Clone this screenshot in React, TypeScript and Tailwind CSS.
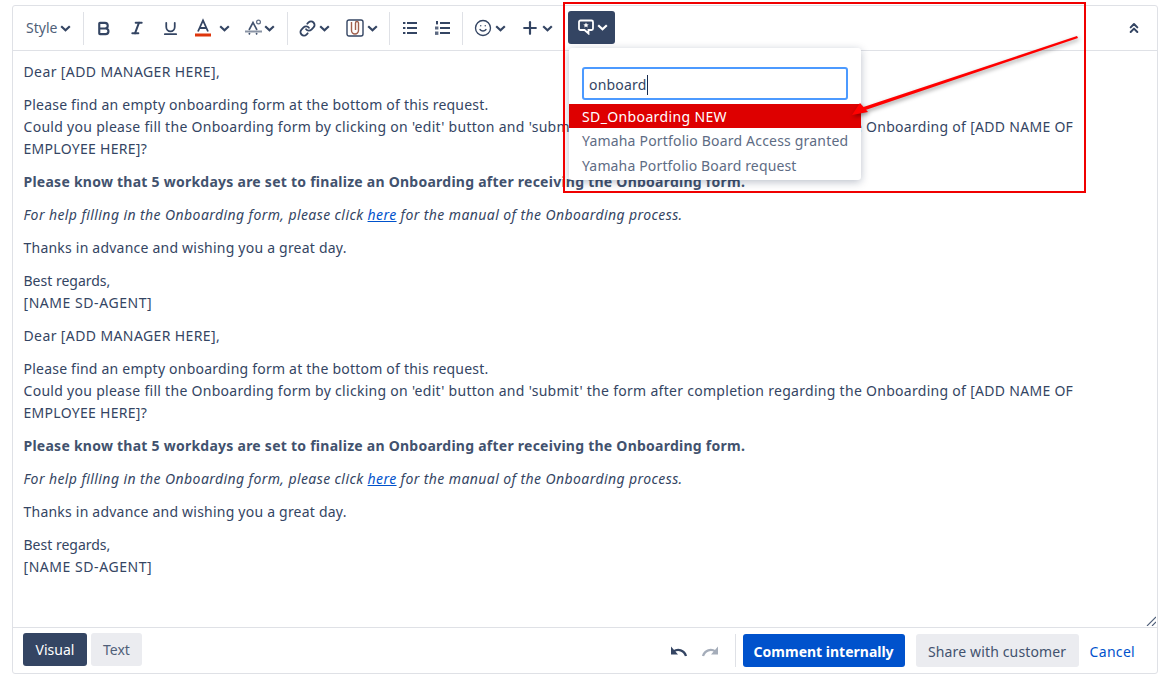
import React from 'react';
import { Bold, ChevronsUp, Italic, Link, Plus, Smile, Underline } from 'lucide-react';

const Chevron = ({ className = '' }: { className?: string }) => (
  <svg width="11" height="7" viewBox="0 0 11 7" fill="none" className={className}>
    <path d="M1.2 1.2 L5.5 5.2 L9.8 1.2" stroke="currentColor" strokeWidth="2.2" />
  </svg>
);

const Sep = () => <div className="w-px h-[33px] bg-[#dfe1e6]" />;

const TextColorIcon = () => (
  <svg width="18" height="20" viewBox="0 0 18 20" fill="none">
    <path d="M4 13.5 L9 2.5 L14 13.5 M5.8 10 H12.2" stroke="#344563" strokeWidth="1.8" />
    <rect x="1" y="15.5" width="16" height="3" fill="#de350b" />
  </svg>
);

const StrikeAIcon = () => (
  <svg width="20" height="20" viewBox="0 0 20 20" fill="none">
    <path d="M5 12 L9 4.5 L13 12 M5 16.5 L5.8 15 M13 16.5 L12.2 15" stroke="#42526e" strokeWidth="1.6" />
    <rect x="1" y="12.5" width="17" height="2" fill="#8993a4" />
    <circle cx="14.5" cy="4" r="1.9" stroke="#5e6c84" strokeWidth="1.2" />
  </svg>
);

const AttachIcon = () => (
  <svg width="18" height="18" viewBox="0 0 18 18" fill="none">
    <rect x="1" y="1" width="16" height="16" rx="2" stroke="#344563" strokeWidth="1.4" />
    <path d="M5.5 3 V11.5 A3.5 3.5 0 0 0 12.5 11.5 V4 A1.5 1.5 0 0 0 9.5 4 V11" stroke="#a0604d" strokeWidth="1.4" />
  </svg>
);

const ListIcon = () => (
  <svg width="14" height="14" viewBox="0 0 14 14" fill="#344563">
    <rect x="0" y="1" width="2.4" height="2" />
    <rect x="4" y="1" width="10" height="2" />
    <rect x="0" y="6" width="2.4" height="2" />
    <rect x="4" y="6" width="10" height="2" />
    <rect x="0" y="11" width="2.4" height="2" />
    <rect x="4" y="11" width="10" height="2" />
  </svg>
);

const OrderedIcon = () => (
  <svg width="15" height="14" viewBox="0 0 15 14" fill="#344563">
    <rect x="1" y="0" width="2" height="3.4" />
    <rect x="0" y="5.5" width="3.4" height="3" opacity="0.8" />
    <rect x="0" y="10.5" width="3.4" height="3.4" opacity="0.8" />
    <rect x="5" y="1" width="10" height="2" />
    <rect x="5" y="6" width="10" height="2" />
    <rect x="5" y="11" width="10" height="2" />
  </svg>
);

const TemplateIcon = () => (
  <svg width="17" height="16" viewBox="0 0 17 16" fill="none">
    <path d="M2.5 1.5 H13.5 A1.5 1.5 0 0 1 15 3 V9.5 A1.5 1.5 0 0 1 13.5 11 H10.5 V14.5 L6.5 11 H2.5 A1.5 1.5 0 0 1 1 9.5 V3 A1.5 1.5 0 0 1 2.5 1.5 Z" stroke="#fff" strokeWidth="1.8" />
    <path d="M8 3.5 L8.8 5.3 L10.7 5.5 L9.3 6.7 L9.7 8.6 L8 7.6 L6.3 8.6 L6.7 6.7 L5.3 5.5 L7.2 5.3 Z" fill="#fff" />
  </svg>
);

const UndoIcon = ({ className = '' }: { className?: string }) => (
  <svg width="18" height="12" viewBox="0 0 18 12" fill="none" className={className}>
    <path d="M16 11 C14 5 8 3.5 3.5 6.5" stroke="currentColor" strokeWidth="2.3" />
    <path d="M1 1.5 L1 9.5 L8 9.5 Z" fill="currentColor" />
  </svg>
);

const Letter = () => (
  <>
    <p className="tracking-[0.39px]">Dear [ADD MANAGER HERE],</p>
    <p>
      Please find an empty onboarding form at the bottom of this request.
      <br />
      <span className="tracking-[0.29px]">Could you please fill the Onboarding form by clicking on 'edit' button and 'submit' the form after completion regarding the Onboarding of [ADD NAME OF EMPLOYEE HERE]?</span>
    </p>
    <p className="font-bold tracking-[0.25px] text-[#42526e]">Please know that 5 workdays are set to finalize an Onboarding after receiving the Onboarding form.</p>
    <p className="italic tracking-[0.41px]">
      For help filling in the Onboarding form, please click <a className="text-[#0052cc] underline">here</a> for the manual of the Onboarding process.
    </p>
    <p>Thanks in advance and wishing you a great day.</p>
    <p>
      <span className="tracking-[0px]">Best regards,</span>
      <br />
      <span className="tracking-[0.55px]">[NAME SD-AGENT]</span>
    </p>
  </>
);

export default function App() {
  return (
    <div className="relative w-[1170px] h-[686px] bg-white overflow-hidden text-[14px] leading-[22px] text-[#344563] font-['Noto_Sans',sans-serif]">
      <div className="pt-[5px] pl-3">
        <div className="w-[1146px] h-[669px] flex flex-col border border-[#dfe1e6] rounded-[3px]">
          {/* top toolbar */}
          <div className="h-[45px] shrink-0 flex items-center border-b border-[#dfe1e6] pl-[13px] pr-[15px]">
            <div className="w-[57px] flex items-center text-[#505f79]">
              Style
              <Chevron className="ml-[3px] text-[#344563]" />
            </div>
            <Sep />
            <div className="w-[35px] ml-[2px] flex justify-center"><Bold size={17} strokeWidth={3} /></div>
            <div className="w-[31px] flex justify-center"><Italic size={16} strokeWidth={3} /></div>
            <div className="w-[33px] ml-[2px] flex justify-center"><Underline size={17} strokeWidth={2.5} /></div>
            <div className="w-[50px] flex items-center pl-[7px]">
              <TextColorIcon />
              <Chevron className="ml-[7px]" />
            </div>
            <div className="w-[50px] flex items-center pl-[7px]">
              <StrikeAIcon />
              <Chevron />
            </div>
            <Sep />
            <div className="w-[48px] flex items-center pl-[11px]">
              <Link size={17} strokeWidth={2.6} />
              <Chevron className="ml-[3px]" />
            </div>
            <div className="w-[53px] flex items-center pl-[10px]">
              <AttachIcon />
              <Chevron className="ml-[3px]" />
            </div>
            <Sep />
            <div className="w-[33px] ml-[3px] flex justify-center"><ListIcon /></div>
            <div className="w-[33px] flex justify-center"><OrderedIcon /></div>
            <div className="w-[3px]" />
            <Sep />
            <div className="w-[46px] flex items-center pl-[11px]">
              <Smile size={18} strokeWidth={1.8} />
              <Chevron className="ml-[3px]" />
            </div>
            <div className="w-[46px] flex items-center pl-[11px]">
              <Plus size={20} strokeWidth={2.6} />
              <Chevron className="ml-[2px]" />
            </div>
            <div className="ml-[13px] mb-[2px] pl-[2px] w-[47px] h-[33px] rounded-[3px] bg-[#344563] flex items-center justify-center gap-[2px] text-white">
              <TemplateIcon />
              <Chevron />
            </div>
            <ChevronsUp size={16} strokeWidth={3} className="ml-auto" />
          </div>

          {/* editor body */}
          <div className="relative flex-1 pt-[10px] pl-[10.5px] pr-[60px] flex flex-col gap-[11px] tracking-[0.22px]">
            <Letter />
            <Letter />
            <svg className="absolute right-[1px] bottom-[1px]" width="10" height="10" viewBox="0 0 10 10" fill="none">
              <path d="M1 10 L10 1 M6 10 L10 6" stroke="#505f79" strokeWidth="1.1" />
            </svg>
          </div>

          {/* bottom bar */}
          <div className="h-[46px] shrink-0 flex items-center border-t border-[#dfe1e6] pl-[10px] pr-[22px]">
            <div className="w-16 h-[33px] -mt-[2px] rounded-[3px] bg-[#344563] text-white flex items-center justify-center">Visual</div>
            <div className="w-[51px] h-[33px] -mt-[2px] ml-1 rounded-[3px] bg-[#ebecf0] text-[#505f79] flex items-center justify-center">Text</div>
            <div className="ml-auto flex items-center">
              <UndoIcon className="text-[#344563]" />
              <UndoIcon className="ml-[13px] -scale-x-100 text-[#a5adba]" />
              <div className="w-px h-[33px] ml-4 mr-[7px] bg-[#dfe1e6]" />
              <div className="w-[162px] h-[33px] pt-[2px] rounded-[3px] bg-[#0052cc] text-white font-bold flex items-center justify-center">Comment internally</div>
              <div className="w-[163px] h-[33px] pt-[2px] ml-[11px] rounded-[3px] bg-[#ebecf0] text-[#42526e] tracking-[0.15px] flex items-center justify-center">Share with customer</div>
              <a className="ml-[11px] pt-[2px] text-[#0052cc] tracking-[0.3px]">Cancel</a>
            </div>
          </div>
        </div>
      </div>

      {/* template dropdown */}
      <div className="absolute left-[569px] top-[48px] w-[292px] h-[132px] bg-white rounded-[3px] shadow-[0_2px_8px_rgba(9,30,66,0.28)] pt-[19px] pb-[3px] tracking-[0.19px]">
        <div className="mx-[13px] h-[33px] pt-[2px] border-2 border-[#4c9aff] rounded-[3px] flex items-center px-[5px]">
          onboard
          <span className="w-px h-[20px] bg-[#172b4d]" />
        </div>
        <div className="mt-1 h-6 pt-[2px] bg-[#de0000] text-white pl-[13px] flex items-center tracking-[0.37px]">SD_Onboarding NEW</div>
        <div className="h-[24.5px] pt-[2px] text-[#5e6c84] pl-[13px] flex items-center whitespace-nowrap">Yamaha Portfolio Board Access granted</div>
        <div className="h-[24.5px] pt-[2px] text-[#5e6c84] pl-[13px] flex items-center whitespace-nowrap tracking-[0.15px]">Yamaha Portfolio Board request</div>
      </div>

      {/* annotation */}
      <div className="absolute left-[563px] top-[2px] w-[523px] h-[191px] border-2 border-[#f00000] pointer-events-none" />
      <svg className="absolute left-0 top-0 pointer-events-none" width="1170" height="686" viewBox="0 0 1170 686" fill="none">
        <g className="drop-shadow-[1px_2px_2px_rgba(0,0,0,0.4)]">
          <path d="M1077 36 L1078 38 L864 110.5 L862 107.5 Z" fill="#ff0000" />
          <path d="M852 115 L860 103 L868 112 Z" fill="#ff0000" />
        </g>
      </svg>
    </div>
  );
}
